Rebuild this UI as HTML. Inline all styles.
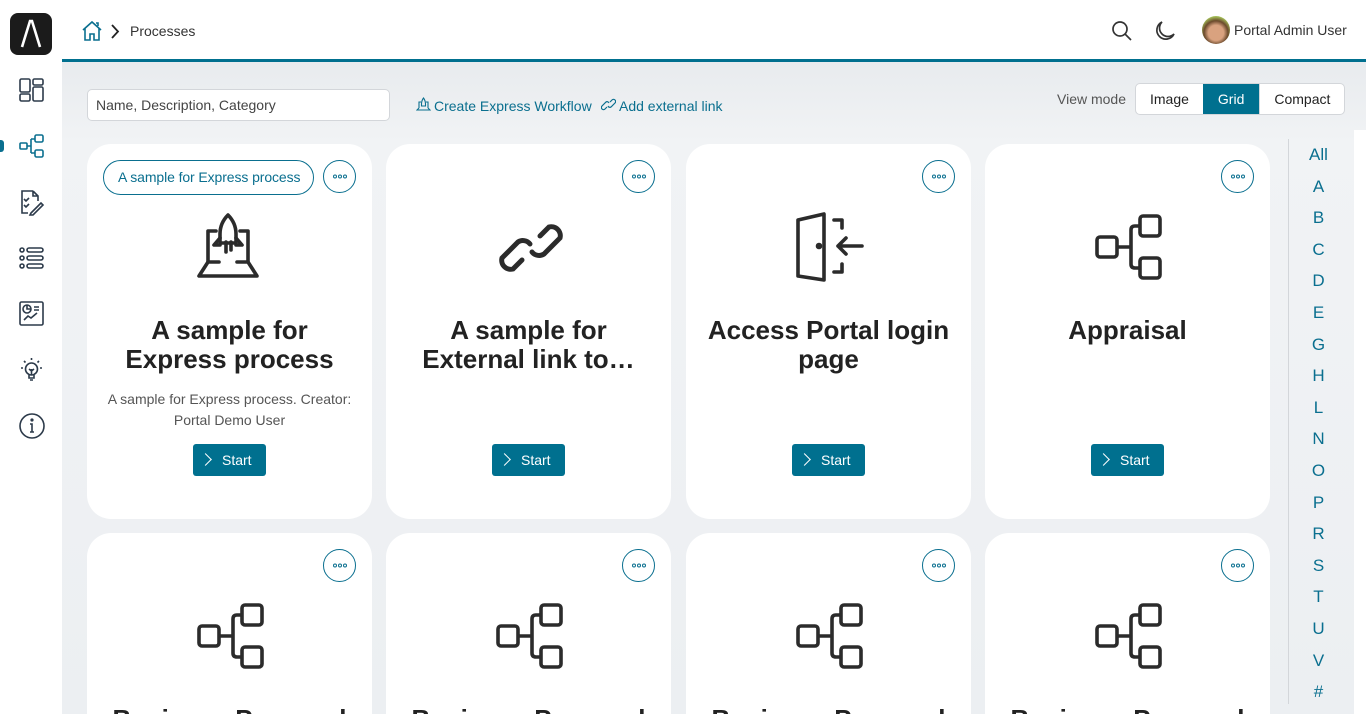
<!DOCTYPE html>
<html style="overflow:hidden;height:714px"><head><meta charset="utf-8"><style>
*{box-sizing:border-box;margin:0;padding:0}
body{width:1366px;height:714px;overflow:hidden;font-family:"Liberation Sans",sans-serif;background:#eceff2;position:relative;color:#222}
.side{position:absolute;left:0;top:0;width:62px;height:714px;background:#fff}
.logo{position:absolute;left:10px;top:13px;width:42px;height:42px;border-radius:8px;background:#1b1b1b}
.sicon{position:absolute;left:18px}
.header{position:absolute;left:62px;top:0;right:0;height:62px;background:#fff;border-bottom:3px solid #00708f}
.main{position:absolute;left:62px;top:62px;right:0;bottom:0;background:linear-gradient(180deg,#e8ebee,#f1f3f5 80px,#eceff2)}
.search{position:absolute;left:87px;top:89px;width:303px;height:32px;border:1px solid #d3d6da;border-radius:5px;background:#fff;font-size:14px;color:#444;padding:7px 8px}
.lnk{position:absolute;top:98px;font-size:14px;color:#0a6f8f}
.vm{position:absolute;top:91px;left:1057px;font-size:14px;color:#555}
.seg{position:absolute;top:83px;left:1135px;height:32px;display:flex;border:1px solid #d3d6da;border-radius:5px;background:#fff;overflow:hidden;font-size:14px}
.seg div{padding:7px 14px;color:#222}
.seg .on{background:#00708f;color:#fff;padding:7px 15px}
.card{position:absolute;width:285px;background:#fff;border-radius:24px;text-align:center;overflow:hidden}
.more{position:absolute;right:16px;top:16px;width:33px;height:33px;border:1px solid #0a6f8f;border-radius:50%}
.more svg{position:absolute;left:9px;top:13px}
.pill{position:absolute;left:16px;top:16px;height:35px;border:1px solid #0a6f8f;border-radius:18px;padding:0 13px 0 14px;line-height:33px;font-size:14px;color:#0a6f8f;letter-spacing:-0.1px}
.ic{position:absolute;left:110px;top:68px}
.t{position:absolute;left:30px;right:30px;top:172px;font-size:26px;font-weight:bold;line-height:29px;color:#222}
.d{position:absolute;left:12px;right:12px;top:245px;font-size:14px;line-height:21px;color:#555}
.st{position:absolute;top:300px;left:106px;width:73px;height:32px;border-radius:3px;background:#00708f;color:#fff;font-size:14px;line-height:32px;text-align:left;padding-left:29px}
.st:before{content:"";position:absolute;left:8px;top:11px;width:8px;height:8px;border-right:1px solid #fff;border-top:1px solid #fff;transform:rotate(45deg)}
.alpha{position:absolute;left:1288px;top:139px;width:60px;height:565px;border-left:1px solid #d3d6da;text-align:center;color:#0a6f8f;font-size:17px}
.alpha div{height:31.6px;line-height:31.6px}
.rw{position:absolute;left:1354px;top:130px;width:12px;height:584px;background:#fff}
</style></head><body>
<div class="side">
<div class="logo"><svg width="42" height="42"><path d="M12 34 L20 8 H22 L30 34" fill="none" stroke="#fff" stroke-width="2.6"/></svg></div>
<svg class="sicon" style="top:77px" width="27" height="27" fill="none" stroke="#2c3a4a" stroke-width="1.6"><rect x="2" y="2" width="10" height="13" rx="1.5"/><rect x="2" y="17" width="10" height="7" rx="1.5"/><rect x="15" y="2" width="10" height="6" rx="1.5"/><rect x="15" y="10" width="10" height="14" rx="1.5"/></svg>
<div style="position:absolute;left:0;top:140px;width:4px;height:12px;background:#0a6f8f;border-radius:0 3px 3px 0"></div>
<svg class="sicon" style="top:133px" width="27" height="27" fill="none" stroke="#0a6f8f" stroke-width="1.6"><rect x="2" y="10" width="7" height="6" rx="1"/><rect x="17" y="2" width="8" height="7" rx="1.5"/><rect x="17" y="17" width="8" height="7" rx="1.5"/><path d="M9 13H13M13 6H17M13 20H17M13 6V20"/></svg>
<svg class="sicon" style="top:189px" width="27" height="27" fill="none" stroke="#2c3a4a" stroke-width="1.6"><path d="M15 2H4V24H10M15 2L20 7V12M15 2V7H20"/><path d="M6 10l2 2 3-3M6 16l2 2 3-3"/><path d="M13 24L23 14l2 2-10 10h-3z"/></svg>
<svg class="sicon" style="top:245px" width="27" height="27" fill="none" stroke="#2c3a4a" stroke-width="1.6"><circle cx="4" cy="5" r="2"/><circle cx="4" cy="13" r="2"/><circle cx="4" cy="21" r="2"/><rect x="9" y="3" width="16" height="4" rx="2"/><rect x="9" y="11" width="16" height="4" rx="2"/><rect x="9" y="19" width="16" height="4" rx="2"/></svg>
<svg class="sicon" style="top:300px" width="27" height="27" fill="none" stroke="#2c3a4a" stroke-width="1.6"><rect x="2" y="2" width="23" height="23" rx="1.5"/><circle cx="9" cy="9" r="4"/><path d="M9 5V9H13M16 7H21M16 10H21M6 20l4-4 3 2 6-5"/></svg>
<svg class="sicon" style="top:356px" width="27" height="27" fill="none" stroke="#2c3a4a" stroke-width="1.6"><circle cx="13.5" cy="13" r="6"/><path d="M11 19V22H16V19M12 24H15M13.5 13V19M11 13l2.5 2 2.5-2M3 12H5M22 12H24M6 5l1.5 1.5M21 5l-1.5 1.5M13.5 2V4"/></svg>
<svg class="sicon" style="top:412px" width="28" height="28" fill="none" stroke="#2c3a4a" stroke-width="1.6"><circle cx="14" cy="14" r="12"/><path d="M12 12H14V20M12 20H16"/><circle cx="14" cy="8" r="0.8" fill="#2c3a4a"/></svg>
</div>
<div class="header">
<svg style="position:absolute;left:19px;top:20px" width="22" height="22" fill="none" stroke="#0a6f8f" stroke-width="1.6"><path d="M2 10L11 2L20 10M4 8V20H9V14H13V20H18V8M15 3h2v3"/></svg>
<svg style="position:absolute;left:47px;top:24px" width="12" height="16" fill="none" stroke="#222" stroke-width="1.8"><path d="M3 1L9 7.5L3 14"/></svg>
<div style="position:absolute;left:68px;top:23px;font-size:14px;color:#333">Processes</div>
<svg style="position:absolute;left:1049px;top:20px" width="22" height="22" fill="none" stroke="#333" stroke-width="1.7"><circle cx="9" cy="9" r="7"/><path d="M14 14L20 20"/></svg>
<svg style="position:absolute;left:1092px;top:20px" width="22" height="22" fill="none" stroke="#333" stroke-width="1.7"><path d="M8 2A9 9 0 1 0 20 14A7 7 0 0 1 8 2Z"/></svg>
<div style="position:absolute;left:1140px;top:16px;width:28px;height:28px;border-radius:50%;background:radial-gradient(circle at 50% 60%,#d9a27f 35%,#6b4a2c 55%,#a6c25a 75%)"></div>
<div style="position:absolute;left:1172px;top:22px;font-size:14px;color:#333">Portal Admin User</div>
</div>
<div class="main"></div>
<div class="search">Name, Description, Category</div>
<svg style="position:absolute;left:416px;top:97px" width="15" height="14" fill="none" stroke="#0a6f8f" stroke-width="1.1"><path d="M3 11V5H5M12 11V5H10M7.5 1C6 3 5.5 5 5.5 7V9H9.5V7C9.5 5 9 3 7.5 1ZM3 11L1 13H14L12 11"/></svg>
<div class="lnk" style="left:434px">Create Express Workflow</div>
<svg style="position:absolute;left:601px;top:98px" width="15" height="13" fill="none" stroke="#0a6f8f" stroke-width="1.2"><path d="M6 9L4 11A2 2 0 0 1 1 8L5 4A2 2 0 0 1 8 5M9 4L11 2A2 2 0 0 1 14 5L10 9A2 2 0 0 1 7 8"/></svg>
<div class="lnk" style="left:619px">Add external link</div>
<div class="vm">View mode</div>
<div class="seg"><div>Image</div><div class="on">Grid</div><div style="border-left:1px solid #d3d6da">Compact</div></div>

<div class="card" style="left:87px;top:144px;height:375px">
<div class="pill">A sample for Express process</div><div class="more"><svg width="14" height="5" fill="none" stroke="#0a6f8f" stroke-width="1"><circle cx="2" cy="2.5" r="1.5"/><circle cx="7" cy="2.5" r="1.5"/><circle cx="12" cy="2.5" r="1.5"/></svg></div>
<svg class="ic" width="70" height="72" fill="none" stroke="#2b2b2b" stroke-width="3.6" stroke-linejoin="round" stroke-linecap="round"><path d="M11 50V19H19M51 50V19H43"/><path d="M31 3C25 9 23 15 23 22V31H39V22C39 15 37 9 31 3Z"/><path d="M23 26L17 33H23M39 26L45 33H39M29 30V40M34 30V38"/><path d="M11 50L2 64H60L51 50H40M22 50H11"/></svg>
<div class="t">A sample for Express process</div>
<div class="d">A sample for Express process. Creator: Portal Demo User</div>
<div class="st">Start</div></div>

<div class="card" style="left:386px;top:144px;height:375px">
<div class="more"><svg width="14" height="5" fill="none" stroke="#0a6f8f" stroke-width="1"><circle cx="2" cy="2.5" r="1.5"/><circle cx="7" cy="2.5" r="1.5"/><circle cx="12" cy="2.5" r="1.5"/></svg></div>
<svg class="ic" width="70" height="72" fill="none" stroke="#2b2b2b" stroke-width="5" stroke-linecap="round"><path d="M26 48L17 57A9 9 0 0 1 6 46L22 30A9 9 0 0 1 34 32"/><path d="M44 24L53 15A9 9 0 0 1 64 26L48 42A9 9 0 0 1 36 40"/></svg>
<div class="t">A sample for External link to…</div>
<div class="st">Start</div></div>

<div class="card" style="left:686px;top:144px;height:375px">
<div class="more"><svg width="14" height="5" fill="none" stroke="#0a6f8f" stroke-width="1"><circle cx="2" cy="2.5" r="1.5"/><circle cx="7" cy="2.5" r="1.5"/><circle cx="12" cy="2.5" r="1.5"/></svg></div>
<svg class="ic" width="70" height="72" fill="none" stroke="#2b2b2b" stroke-width="3.6" stroke-linecap="round" stroke-linejoin="round"><path d="M2 8L28 2V68L2 64Z"/><circle cx="23" cy="34" r="1.5" fill="#2b2b2b"/><path d="M38 8H46V16M38 60H46V52M42 34H66M50 26L42 34L50 42"/></svg>
<div class="t" style="left:8px;right:8px">Access Portal login page</div>
<div class="st">Start</div></div>

<div class="card" style="left:985px;top:144px;height:375px">
<div class="more"><svg width="14" height="5" fill="none" stroke="#0a6f8f" stroke-width="1"><circle cx="2" cy="2.5" r="1.5"/><circle cx="7" cy="2.5" r="1.5"/><circle cx="12" cy="2.5" r="1.5"/></svg></div>
<svg class="ic" width="70" height="72" fill="none" stroke="#2b2b2b" stroke-width="3.6" stroke-linejoin="round"><rect x="2" y="25" width="20" height="20" rx="3"/><rect x="45" y="4" width="20" height="20" rx="3"/><rect x="45" y="46" width="20" height="20" rx="3"/><path d="M22 35H36M45 14H40Q36 14 36 18V52Q36 56 40 56H45"/></svg>
<div class="t">Appraisal</div>
<div class="st">Start</div></div>

<div class="card" style="left:87px;top:533px;height:181px;border-radius:24px 24px 0 0"><div class="more"><svg width="14" height="5" fill="none" stroke="#0a6f8f" stroke-width="1"><circle cx="2" cy="2.5" r="1.5"/><circle cx="7" cy="2.5" r="1.5"/><circle cx="12" cy="2.5" r="1.5"/></svg></div>
<svg class="ic" width="70" height="72" fill="none" stroke="#2b2b2b" stroke-width="3.6" stroke-linejoin="round"><rect x="2" y="25" width="20" height="20" rx="3"/><rect x="45" y="4" width="20" height="20" rx="3"/><rect x="45" y="46" width="20" height="20" rx="3"/><path d="M22 35H36M45 14H40Q36 14 36 18V52Q36 56 40 56H45"/></svg>
<div class="t" style="left:0;right:0">Business Proposal</div></div>
<div class="card" style="left:386px;top:533px;height:181px;border-radius:24px 24px 0 0"><div class="more"><svg width="14" height="5" fill="none" stroke="#0a6f8f" stroke-width="1"><circle cx="2" cy="2.5" r="1.5"/><circle cx="7" cy="2.5" r="1.5"/><circle cx="12" cy="2.5" r="1.5"/></svg></div>
<svg class="ic" width="70" height="72" fill="none" stroke="#2b2b2b" stroke-width="3.6" stroke-linejoin="round"><rect x="2" y="25" width="20" height="20" rx="3"/><rect x="45" y="4" width="20" height="20" rx="3"/><rect x="45" y="46" width="20" height="20" rx="3"/><path d="M22 35H36M45 14H40Q36 14 36 18V52Q36 56 40 56H45"/></svg>
<div class="t" style="left:0;right:0">Business Proposal</div></div>
<div class="card" style="left:686px;top:533px;height:181px;border-radius:24px 24px 0 0"><div class="more"><svg width="14" height="5" fill="none" stroke="#0a6f8f" stroke-width="1"><circle cx="2" cy="2.5" r="1.5"/><circle cx="7" cy="2.5" r="1.5"/><circle cx="12" cy="2.5" r="1.5"/></svg></div>
<svg class="ic" width="70" height="72" fill="none" stroke="#2b2b2b" stroke-width="3.6" stroke-linejoin="round"><rect x="2" y="25" width="20" height="20" rx="3"/><rect x="45" y="4" width="20" height="20" rx="3"/><rect x="45" y="46" width="20" height="20" rx="3"/><path d="M22 35H36M45 14H40Q36 14 36 18V52Q36 56 40 56H45"/></svg>
<div class="t" style="left:0;right:0">Business Proposal</div></div>
<div class="card" style="left:985px;top:533px;height:181px;border-radius:24px 24px 0 0"><div class="more"><svg width="14" height="5" fill="none" stroke="#0a6f8f" stroke-width="1"><circle cx="2" cy="2.5" r="1.5"/><circle cx="7" cy="2.5" r="1.5"/><circle cx="12" cy="2.5" r="1.5"/></svg></div>
<svg class="ic" width="70" height="72" fill="none" stroke="#2b2b2b" stroke-width="3.6" stroke-linejoin="round"><rect x="2" y="25" width="20" height="20" rx="3"/><rect x="45" y="4" width="20" height="20" rx="3"/><rect x="45" y="46" width="20" height="20" rx="3"/><path d="M22 35H36M45 14H40Q36 14 36 18V52Q36 56 40 56H45"/></svg>
<div class="t" style="left:0;right:0">Business Proposal</div></div>

<div class="alpha"><div>All</div><div>A</div><div>B</div><div>C</div><div>D</div><div>E</div><div>G</div><div>H</div><div>L</div><div>N</div><div>O</div><div>P</div><div>R</div><div>S</div><div>T</div><div>U</div><div>V</div><div>#</div></div>
<div class="rw"></div>
</body></html>
